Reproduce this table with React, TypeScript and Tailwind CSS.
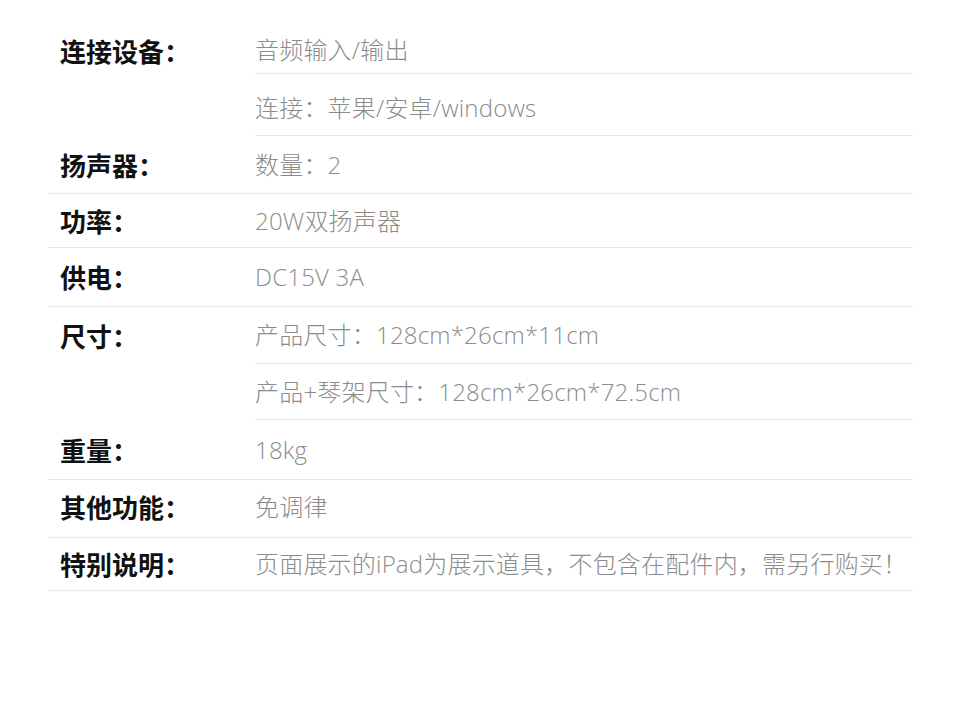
import React from 'react'

type SpecValue = {
  text: string
  // row height incl. bottom border, plus optional top nudge
  h: string
}

type SpecRow = {
  label: string
  values: SpecValue[]
}

const SPECS: SpecRow[] = [
  {
    label: '连接设备：',
    values: [
      { text: '音频输入/输出', h: 'h-[51px] pt-[4px]' },
      { text: '连接：苹果/安卓/windows', h: 'h-[62px] pt-[6px]' },
    ],
  },
  { label: '扬声器：', values: [{ text: '数量：2', h: 'h-[58px]' }] },
  { label: '功率：', values: [{ text: '20W双扬声器', h: 'h-[54px]' }] },
  { label: '供电：', values: [{ text: 'DC15V 3A', h: 'h-[59px]' }] },
  {
    label: '尺寸：',
    values: [
      { text: '产品尺寸：128cm*26cm*11cm', h: 'h-[57px]' },
      { text: '产品+琴架尺寸：128cm*26cm*72.5cm', h: 'h-[56px]' },
    ],
  },
  { label: '重量：', values: [{ text: '18kg', h: 'h-[60px]' }] },
  { label: '其他功能：', values: [{ text: '免调律', h: 'h-[58px] pb-[3px]' }] },
  {
    label: '特别说明：',
    values: [
      {
        text: '页面展示的iPad为展示道具，不包含在配件内，需另行购买！',
        h: 'h-[53px]',
      },
    ],
  },
]

const SpecTableRow: React.FC<{ row: SpecRow }> = ({ row }) => {
  const grouped = row.values.length > 1
  const line = 'border-b border-[#e9e9e9]'

  return (
    <div className="flex">
      <div
        className={`w-[207px] shrink-0 pl-3 flex items-center ${row.values[0].h} ${
          grouped ? '' : line
        }`}>
        <span className="text-[26px] font-bold text-[#111] font-['Noto_Sans_CJK_SC',sans-serif] leading-none">
          {row.label}
        </span>
      </div>
      <div className="flex-1 flex flex-col">
        {row.values.map((v, i) => (
          <div key={i} className={`flex items-center ${v.h} ${line}`}>
            <span className="text-[24px] font-light tracking-[0.2px] text-[#8c8c8c] leading-none whitespace-nowrap font-['Open_Sans','Noto_Sans_CJK_SC',sans-serif]">
              {v.text}
            </span>
          </div>
        ))}
      </div>
    </div>
  )
}

export default function App() {
  return (
    <div className="w-[960px] h-[714px] bg-white pt-[23px] pl-[48px]">
      <div className="w-[865px] flex flex-col">
        {SPECS.map((row, i) => (
          <SpecTableRow key={i} row={row} />
        ))}
      </div>
    </div>
  )
}
